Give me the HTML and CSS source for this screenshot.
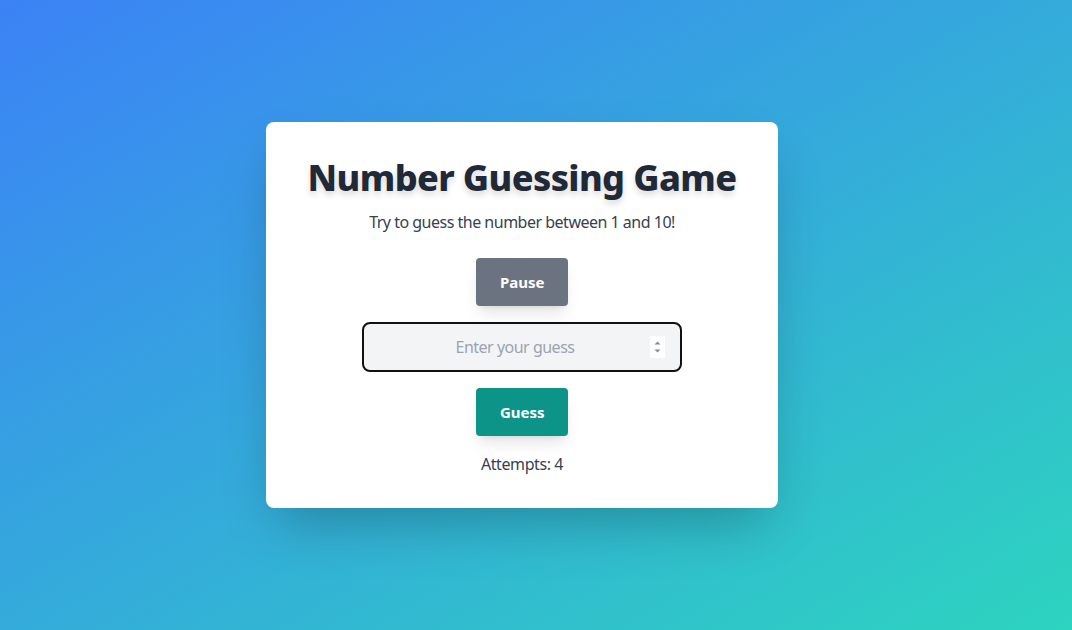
FILE: index.html
```html
<!DOCTYPE html>
<html lang="en">
<head>
<meta charset="utf-8">
<title>Number Guessing Game</title>
<link rel="stylesheet" href="styles.css">
</head>
<body>
<main class="page">
  <section class="card">
    <h1 class="title">Number Guessing Game</h1>
    <p class="subtitle">Try to guess the number between 1 and 10!</p>
    <button class="btn btn-pause" type="button">Pause</button>
    <div class="field">
      <input class="guess-input" type="text" placeholder="Enter your guess">
      <span class="spinner">
        <svg width="15" height="22" viewBox="0 0 15 22"><path d="M4.5 8.5 L7.5 5.5 L10.5 8.5 Z" fill="#8a8a8a"/><path d="M4.5 13.5 L7.5 16.5 L10.5 13.5 Z" fill="#8a8a8a"/></svg>
      </span>
    </div>
    <button class="btn btn-guess" type="button">Guess</button>
    <p class="attempts">Attempts: 4</p>
  </section>
</main>
</body>
</html>
```

FILE: styles.css
```css
* { box-sizing: border-box; }
html, body { margin: 0; height: 100%; }
body {
  font-family: "Noto Sans", "Open Sans", "Liberation Sans", sans-serif;
  background: linear-gradient(to bottom right, #3b82f6, #2dd4bf);
  min-height: 630px;
}
.page {
  min-height: 630px;
  display: flex;
  align-items: center;
  justify-content: center;
}
.card {
  width: 512px;
  background: #fff;
  border-radius: 8px;
  padding: 32px;
  display: flex;
  flex-direction: column;
  align-items: center;
  box-shadow: 0 25px 50px -12px rgba(0,0,0,0.25);
  margin-right: 28px;
}
.title {
  margin: 0 0 12px;
  font-size: 36px;
  line-height: 44px;
  padding-top: 2px;
  height: 44px;
  font-weight: 800;
  color: #1f2937;
  letter-spacing: -0.6px;
  text-shadow: 0 4px 6px rgba(0,0,0,0.15);
}
.subtitle {
  margin: 0 0 24px;
  font-size: 16px;
  line-height: 24px;
  color: #374151;
  letter-spacing: -0.5px;
}
.btn {
  font-family: inherit;
  border: none;
  color: #fff;
  font-weight: 700;
  font-size: 15px;
  line-height: 24px;
  padding: 12px 24px;
  width: 92px;
  border-radius: 4px;
  box-shadow: 0 10px 15px -3px rgba(0,0,0,0.1), 0 4px 6px -4px rgba(0,0,0,0.1);
}
.btn-pause { background: #6b7280; }
.btn-guess { background: #0d9488; }
.field {
  position: relative;
  margin: 16px 0;
  width: 320px;
}
.guess-input {
  display: block;
  width: 320px;
  height: 50px;
  border: 2px solid #111;
  border-radius: 8px;
  background: #f3f4f6;
  font-family: inherit;
  font-size: 16px;
  letter-spacing: -0.5px;
  text-align: center;
  color: #111;
  outline: none;
  padding: 0 16px 0 2px;
}
.guess-input::placeholder { color: #9ca3af; }
.spinner {
  position: absolute;
  right: 17px;
  top: 14px;
  width: 15px;
  height: 22px;
  background: #fff;
  display: block;
}
.spinner svg { display: block; }
.attempts {
  margin: 16px 0 0;
  font-size: 16px;
  line-height: 24px;
  color: #374151;
  letter-spacing: -0.4px;
}
```
